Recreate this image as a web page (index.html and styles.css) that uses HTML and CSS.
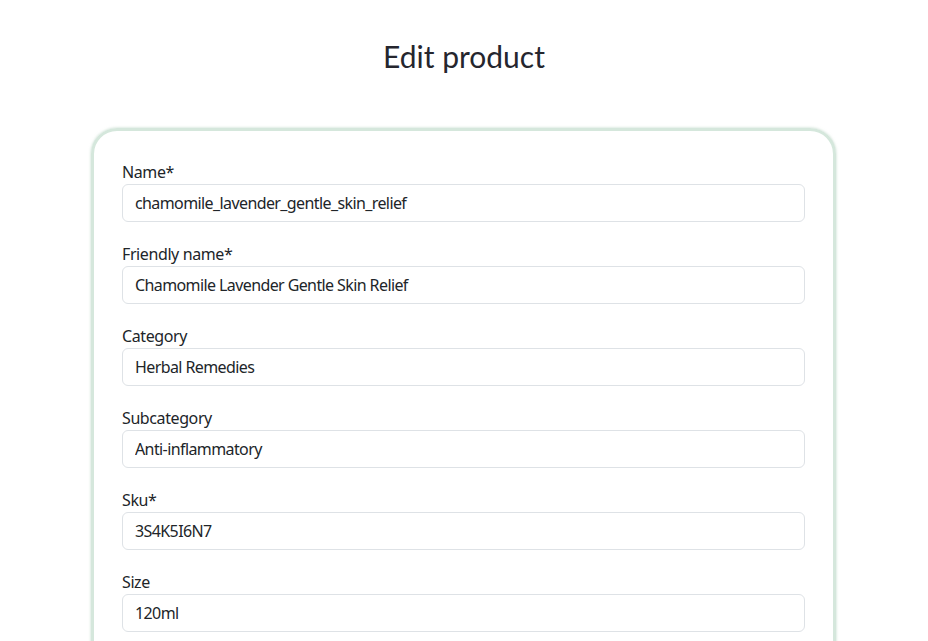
FILE: index.html
```html
<!DOCTYPE html>
<html lang="en">
<head>
<meta charset="utf-8">
<title>Edit product</title>
<link rel="stylesheet" href="styles.css">
</head>
<body>
<main class="page">
  <h1 class="title">Edit product</h1>
  <form class="card">
    <div class="field">
      <label class="label" for="name">Name*</label>
      <input class="input" id="name" type="text" value="chamomile_lavender_gentle_skin_relief">
    </div>
    <div class="field">
      <label class="label" for="friendly">Friendly name*</label>
      <input class="input" id="friendly" type="text" value="Chamomile Lavender Gentle Skin Relief">
    </div>
    <div class="field">
      <label class="label" for="category">Category</label>
      <input class="input" id="category" type="text" value="Herbal Remedies">
    </div>
    <div class="field">
      <label class="label" for="subcategory">Subcategory</label>
      <input class="input" id="subcategory" type="text" value="Anti-inflammatory">
    </div>
    <div class="field">
      <label class="label" for="sku">Sku*</label>
      <input class="input" id="sku" type="text" value="3S4K5I6N7">
    </div>
    <div class="field">
      <label class="label" for="size">Size</label>
      <input class="input" id="size" type="text" value="120ml">
    </div>
  </form>
</main>
</body>
</html>
```
FILE: styles.css
```css
* { box-sizing: border-box; }
html, body { margin: 0; padding: 0; background: #fff; }
body {
  font-family: "Noto Sans", "Open Sans", sans-serif;
  color: #212529;
  font-size: 16px;
  line-height: 24px;
  overflow: hidden;
  height: 641px;
}
.page {
  display: flex;
  flex-direction: column;
  align-items: center;
  padding-top: 32px;
}
.title {
  margin: 0;
  font-family: "Lato", sans-serif;
  font-weight: 400;
  font-size: 30px;
  line-height: 44px;
  height: 48px;
  padding-top: 2px;
  color: #25262e;
}
.card {
  margin-top: 48px;
  width: 745px;
  border: 3px solid #d5e7dc;
  border-radius: 26px;
  box-shadow: 0 0 3px rgba(150, 190, 165, 0.6);
  padding: 29px 28px 60px 28px;
  display: flex;
  flex-direction: column;
  gap: 20px;
  margin-left: -1px;
}
.field { display: flex; flex-direction: column; }
.label { display: block; font-size: 16px; line-height: 24px; letter-spacing: -0.4px; }
.input {
  display: block;
  width: 100%;
  height: 38px;
  border: 1px solid #dee2e6;
  border-radius: 6px;
  padding: 0 12px;
  font-family: inherit;
  font-size: 16px;
  letter-spacing: -0.6px;
  color: #212529;
  background: #fff;
  outline: none;
}
```
